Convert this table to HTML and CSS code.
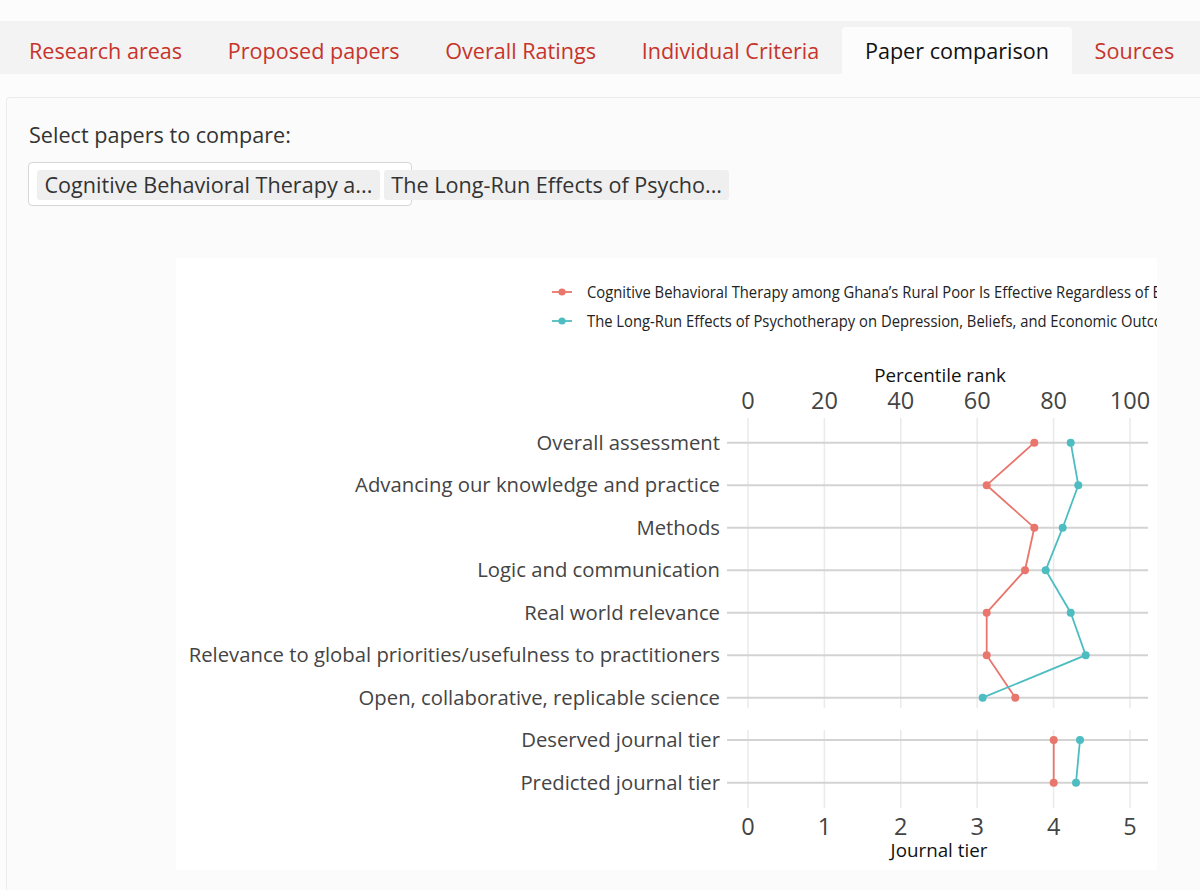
FILE: index.html
```html
<!DOCTYPE html>
<html lang="en">
<head>
<meta charset="utf-8">
<title>Paper comparison</title>
<link rel="stylesheet" href="styles.css">
</head>
<body>
<div class="topspace"></div>
<nav class="tabs">
  <a class="tab">Research areas</a>
  <a class="tab">Proposed papers</a>
  <a class="tab">Overall Ratings</a>
  <a class="tab">Individual Criteria</a>
  <a class="tab active">Paper comparison</a>
  <a class="tab">Sources</a>
</nav>
<section class="panel">
  <div class="label">Select papers to compare:</div>
  <div class="select">
    <span class="chip">Cognitive Behavioral Therapy a...</span>
    <span class="chip">The Long-Run Effects of Psycho...</span>
  </div>
  <div class="chart">
    <svg class="plot" width="981" height="612" viewBox="0 0 981 612" xmlns="http://www.w3.org/2000/svg">
      <!-- legend -->
      <g class="legend">
        <line x1="376" y1="34" x2="396" y2="34" class="l-red"/>
        <circle cx="386" cy="34" r="3.6" class="d-red"/>
        <g transform="translate(411,40) scale(0.925,1)"><text class="leg">Cognitive Behavioral Therapy among Ghana’s Rural Poor Is Effective Regardless of Baseline Mental Distress</text></g>
        <line x1="376" y1="63" x2="396" y2="63" class="l-teal"/>
        <circle cx="386" cy="63" r="3.6" class="d-teal"/>
        <g transform="translate(411,69) scale(0.925,1)"><text class="leg">The Long-Run Effects of Psychotherapy on Depression, Beliefs, and Economic Outcomes</text></g>
      </g>

      <!-- grid -->
      <g class="vgrid">
        <line x1="572" y1="160" x2="572" y2="450"/>
        <line x1="648.4" y1="160" x2="648.4" y2="450"/>
        <line x1="724.8" y1="160" x2="724.8" y2="450"/>
        <line x1="801.2" y1="160" x2="801.2" y2="450"/>
        <line x1="877.6" y1="160" x2="877.6" y2="450"/>
        <line x1="954" y1="160" x2="954" y2="450"/>
        <line x1="572" y1="472" x2="572" y2="550"/>
        <line x1="648.4" y1="472" x2="648.4" y2="550"/>
        <line x1="724.8" y1="472" x2="724.8" y2="550"/>
        <line x1="801.2" y1="472" x2="801.2" y2="550"/>
        <line x1="877.6" y1="472" x2="877.6" y2="550"/>
        <line x1="954" y1="472" x2="954" y2="550"/>
      </g>
      <g class="hgrid">
        <line x1="551" y1="184.7" x2="972" y2="184.7"/>
        <line x1="551" y1="227.2" x2="972" y2="227.2"/>
        <line x1="551" y1="269.7" x2="972" y2="269.7"/>
        <line x1="551" y1="312.2" x2="972" y2="312.2"/>
        <line x1="551" y1="354.7" x2="972" y2="354.7"/>
        <line x1="551" y1="397.2" x2="972" y2="397.2"/>
        <line x1="551" y1="439.7" x2="972" y2="439.7"/>
        <line x1="551" y1="482" x2="972" y2="482"/>
        <line x1="551" y1="524.7" x2="972" y2="524.7"/>
      </g>

      <!-- axis titles & ticks -->
      <text class="axtitle" x="764" y="124">Percentile rank</text>
      <g class="tick">
        <text x="572" y="151">0</text>
        <text x="648.4" y="151">20</text>
        <text x="724.8" y="151">40</text>
        <text x="801.2" y="151">60</text>
        <text x="877.6" y="151">80</text>
        <text x="954" y="151">100</text>
        <text x="572" y="577">0</text>
        <text x="648.4" y="577">1</text>
        <text x="724.8" y="577">2</text>
        <text x="801.2" y="577">3</text>
        <text x="877.6" y="577">4</text>
        <text x="954" y="577">5</text>
      </g>
      <text class="axtitle" x="763" y="599">Journal tier</text>

      <g class="ylab">
        <text x="544" y="191.7">Overall assessment</text>
        <text x="544" y="234.2">Advancing our knowledge and practice</text>
        <text x="544" y="276.7">Methods</text>
        <text x="544" y="319.2">Logic and communication</text>
        <text x="544" y="361.7">Real world relevance</text>
        <text x="544" y="404.2">Relevance to global priorities/usefulness to practitioners</text>
        <text x="544" y="446.7">Open, collaborative, replicable science</text>
        <text x="544" y="489">Deserved journal tier</text>
        <text x="544" y="531.7">Predicted journal tier</text>
      </g>

      <!-- series -->
      <polyline class="l-red" points="858.3,184.7 810.7,227.2 858.3,269.7 849,312.2 810.7,354.7 810.7,397.2 839.3,439.7"/>
      <polyline class="l-teal" points="894.7,184.7 902.3,227.2 886.7,269.7 869.7,312.2 894.7,354.7 909.7,397.2 806.7,439.7"/>
      <polyline class="l-red" points="877.7,482 877.7,524.7"/>
      <polyline class="l-teal" points="904,482 900,524.7"/>
      <g class="d-red">
        <circle cx="858.3" cy="184.7" r="4"/>
        <circle cx="810.7" cy="227.2" r="4"/>
        <circle cx="858.3" cy="269.7" r="4"/>
        <circle cx="849" cy="312.2" r="4"/>
        <circle cx="810.7" cy="354.7" r="4"/>
        <circle cx="810.7" cy="397.2" r="4"/>
        <circle cx="839.3" cy="439.7" r="4"/>
        <circle cx="877.7" cy="482" r="4"/>
        <circle cx="877.7" cy="524.7" r="4"/>
      </g>
      <g class="d-teal">
        <circle cx="894.7" cy="184.7" r="4"/>
        <circle cx="902.3" cy="227.2" r="4"/>
        <circle cx="886.7" cy="269.7" r="4"/>
        <circle cx="869.7" cy="312.2" r="4"/>
        <circle cx="894.7" cy="354.7" r="4"/>
        <circle cx="909.7" cy="397.2" r="4"/>
        <circle cx="806.7" cy="439.7" r="4"/>
        <circle cx="904" cy="482" r="4"/>
        <circle cx="900" cy="524.7" r="4"/>
      </g>
    </svg>
  </div>
</section>
</body>
</html>
```

FILE: styles.css
```css
html, body {
  margin: 0;
  padding: 0;
  background: #fcfcfc;
  font-family: "Open Sans", "Noto Sans", "DejaVu Sans", sans-serif;
  overflow: hidden;
}

.topspace {
  height: 21px;
}

.tabs {
  display: flex;
  align-items: flex-end;
  height: 53px;
  padding-left: 7px;
  background: #f3f3f3;
}

.tab {
  display: block;
  height: 47px;
  line-height: 47px;
  padding: 0 22.8px;
  font-size: 21.6px;
  color: #c7342b;
  white-space: nowrap;
  border-radius: 4px 4px 0 0;
}

.tab:first-child {
  padding-left: 22px;
}

.tab.active {
  background: #fcfcfc;
  color: #111;
}

.panel {
  margin: 23px 0 0 6px;
  padding: 23px 0 40px 21px;
  background: #fbfbfb;
  border: 1px solid #ececec;
  border-right: none;
  border-radius: 4px 0 0 4px;
}

.label {
  font-size: 21.6px;
  line-height: 28px;
  color: #333;
  margin-bottom: 13px;
  padding-left: 1px;
}

.select {
  box-sizing: border-box;
  width: 384px;
  height: 44px;
  padding: 7px 8px;
  display: flex;
  gap: 4px;
  background: #fff;
  border: 1px solid #d6d6d6;
  border-radius: 4px;
  white-space: nowrap;
}

.chip {
  flex: none;
  display: block;
  height: 30px;
  line-height: 30px;
  padding: 0 7.5px;
  font-size: 21.6px;
  color: #333;
  background: #efefef;
  border-radius: 3px;
}

.chart {
  margin: 52px 0 0 148px;
  width: 981px;
  height: 612px;
  background: #fff;
}

.plot {
  display: block;
  overflow: hidden;
  font-family: "Open Sans", "Noto Sans", sans-serif;
}

.leg {
  font-size: 16px;
  fill: #222;
}

.vgrid line {
  stroke: #ebebeb;
  stroke-width: 1.6;
}

.hgrid line {
  stroke: #d3d3d3;
  stroke-width: 2;
}

.axtitle {
  font-size: 18.8px;
  fill: #111;
  text-anchor: middle;
}

.tick text {
  font-size: 23.5px;
  fill: #444;
  text-anchor: middle;
}

.ylab text {
  font-size: 20.3px;
  fill: #444;
  text-anchor: end;
}

.l-red {
  fill: none;
  stroke: #e8766c;
  stroke-width: 1.8;
}

.l-teal {
  fill: none;
  stroke: #4dbdc1;
  stroke-width: 1.8;
}

.d-red {
  fill: #e8766c;
}

.d-teal {
  fill: #4dbdc1;
}
```
